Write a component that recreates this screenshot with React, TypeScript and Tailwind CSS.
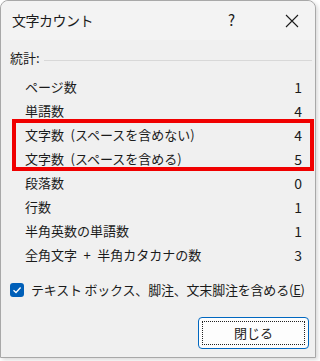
import { useState } from 'react';

const rows = [
  { label: 'ページ数', value: 1 },
  { label: '単語数', value: 4 },
  { label: '文字数\u2002(スペースを含めない)', value: 4 },
  { label: '文字数\u2002(スペースを含める)', value: 5 },
  { label: '段落数', value: 0 },
  { label: '行数', value: 1 },
  { label: '半角英数の単語数', value: 1 },
  { label: '全角文字\u2002+\u2002半角カタカナの数', value: 3 },
];

export default function App() {
  const [includeNotes, setIncludeNotes] = useState(true);

  return (
    <div
      className="w-[320px] h-[361px] bg-white pr-[4px] pb-[3px] text-[#1b1b1b] text-[13px]"
      style={{ fontFamily: '"Noto Sans CJK JP", "Noto Sans", sans-serif' }}
    >
      <div className="h-full bg-[#f0f0f0] border border-[#a8a8a8] rounded-t-[8px] shadow-[2px_2px_4px_rgba(0,0,0,0.15)] flex flex-col">
        {/* タイトルバー */}
        <div className="h-[39px] flex items-center pl-[11px] pr-[16px] bg-[#f3f3f3] rounded-t-[8px]">
          <span className="text-[14px] tracking-[-0.5px]">文字カウント</span>
          <span className="ml-auto mr-[50px] text-[15px]">?</span>
          <svg width="14" height="14" viewBox="0 0 14 14">
            <path d="M1 1 L13 13 M13 1 L1 13" stroke="#1b1b1b" strokeWidth="1.1" />
          </svg>
        </div>

        {/* 統計 */}
        <div className="mt-[6px] h-[24px] flex items-center pl-[9px] pr-[3px] gap-[4px]">
          <span>統計:</span>
          <div className="flex-1 h-px bg-[#d8d8d8] mt-[4px]" />
        </div>

        <div className="relative mt-[5px]">
          {rows.map((row) => (
            <div key={row.label} className="h-[24px] flex items-center pl-[24px] pr-[13px]">
              <span>{row.label}</span>
              <span className="ml-auto text-[14px]">{row.value}</span>
            </div>
          ))}
          {/* 注目枠 */}
          <div className="absolute left-[11px] top-[44px] w-[302px] h-[52px] border-4 border-[#f00000]" />
        </div>

        {/* チェックボックス */}
        <label className="mt-[11px] h-[24px] flex items-center pl-[9px] gap-[7px] cursor-pointer">
          <button
            onClick={() => setIncludeNotes((v) => !v)}
            className={`w-[14px] h-[14px] rounded-[3px] flex items-center justify-center ${
              includeNotes ? 'bg-[#005fb8]' : 'bg-white border border-[#888]'
            }`}
          >
            {includeNotes && (
              <svg width="10" height="10" viewBox="0 0 10 10">
                <path d="M1.5 5.2 L4 7.5 L8.6 2.5" fill="none" stroke="white" strokeWidth="1.3" />
              </svg>
            )}
          </button>
          <span className="tracking-[-0.2px]">
            テキスト ボックス、脚注、文末脚注を含める(<span className="underline">E</span>)
          </span>
        </label>

        {/* ボタン */}
        <div className="mt-[15px] flex justify-end pr-[6px]">
          <button className="w-[111px] h-[32px] bg-[#fdfdfd] border border-[#0067c0] rounded-[4px] p-[3px]">
            <div className="w-full h-full border border-dotted border-[#222] flex items-center justify-center">
              閉じる
            </div>
          </button>
        </div>
      </div>
    </div>
  );
}
